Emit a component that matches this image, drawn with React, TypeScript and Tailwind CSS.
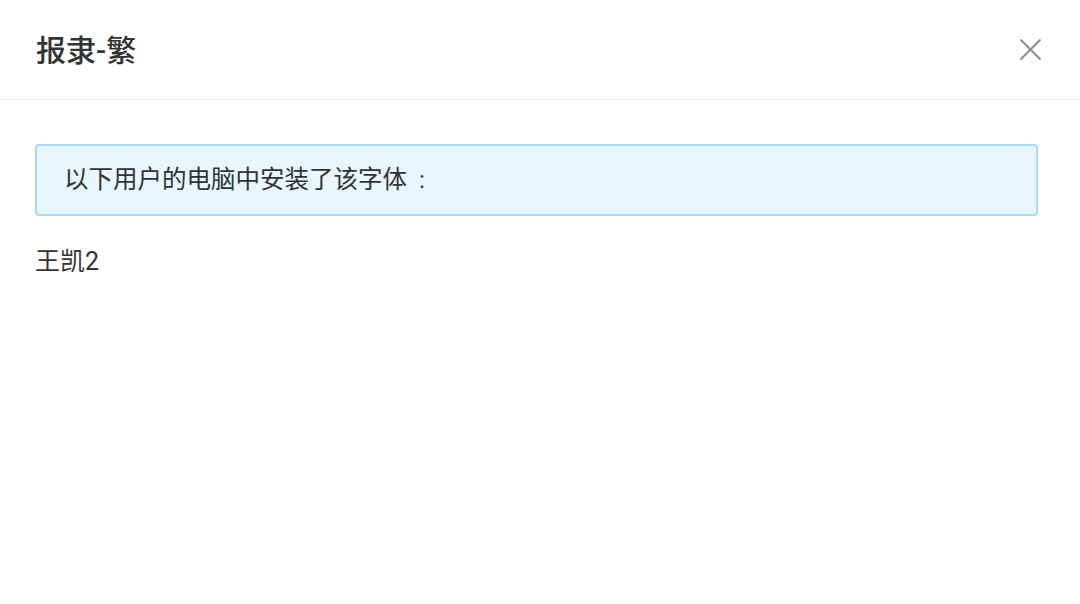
import React from 'react';

const users = ['王凯2'];

export default function App() {
  return (
    <div
      className="w-[1080px] h-[604px] bg-white text-[#333] overflow-hidden"
      style={{ fontFamily: 'Roboto, "Noto Sans CJK SC", "Noto Sans", sans-serif' }}
    >
      <div className="h-[100px] flex items-center justify-between pl-[36px] pr-[38px] border-b border-[#ebebeb]">
        <h2 className="text-[30px] font-medium leading-none text-[#333] pt-[3px]">报隶-繁</h2>
        <button className="w-[24px] h-[24px] flex items-center justify-center text-[#8c8c8c]">
          <svg width="23" height="23" viewBox="0 0 23 23" fill="none" stroke="currentColor" strokeWidth="2">
            <path d="M1.5 1.5 L21.5 21.5 M21.5 1.5 L1.5 21.5" />
          </svg>
        </button>
      </div>

      <div className="pl-[35px] pr-[42px] pt-[44px]">
        <div className="h-[72px] flex items-center px-[27px] bg-[#e8f6fe] border-2 border-[#a9dbfa] rounded-[4px]">
          <span className="text-[24.5px] leading-none text-[#333]">
            以下用户的电脑中安装了该字体<span className="ml-[12px]">:</span>
          </span>
        </div>
        <div className="mt-[30px] space-y-2">
          {users.map((u) => (
            <div key={u} className="text-[25px] leading-[32px] text-[#333]">{u}</div>
          ))}
        </div>
      </div>
    </div>
  );
}
